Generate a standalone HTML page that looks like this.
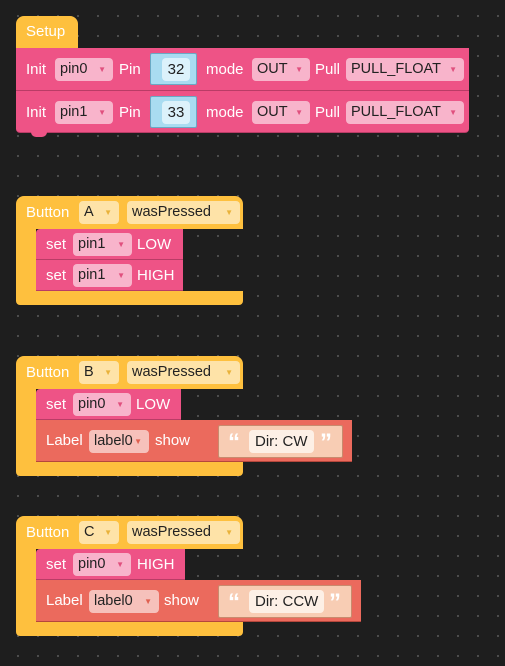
<!DOCTYPE html>
<html><head><meta charset="utf-8"><style>
*{margin:0;padding:0;box-sizing:border-box}
body{width:505px;height:666px;overflow:hidden;background-color:#1e1e1e;background-image:radial-gradient(circle,#555 0.8px,transparent 1.2px);background-size:20px 20px;background-position:8px 6px;font-family:"Liberation Sans",sans-serif;font-size:14.5px;position:relative}
.a{position:absolute}
.y{background:#fec03e}
.p{background:#ee5386;border-bottom:1px solid #b93c66}
.c{background:#eb6a5d;border-bottom:1px solid #b5473c}
.t{position:absolute;color:#fff;line-height:22px;font-size:15px}
.f{position:absolute;height:23px;border-radius:4px;line-height:23px;padding-left:5px;color:#222}
.fp{background:#f8b4cb}
.fy{background:#fee3a8}
.fc{background:#f6c1bb}
.f i{position:absolute;right:7px;top:0;font-style:normal;font-size:8px;color:#e0507e}
.fy i{color:#e9b23a}
.fc i{color:#e06050}
.in{position:absolute;background:#a9dcf1;border:1px solid #6aa9c4;border-radius:2px}
.in b{position:absolute;font-weight:normal;background:#dcf2fb;border-radius:4px;height:23px;line-height:23px;text-align:center;color:#222;font-size:15px}
.s{position:absolute;background:#f8cdb4;border:1px solid #c88b6e;border-radius:2px}
.s b{position:absolute;font-weight:normal;background:#fdf0e6;border-radius:4px;height:23px;line-height:23px;padding:0 6px;color:#222;font-size:15px}
.s u{position:absolute;text-decoration:none;color:#fff;font-size:24px;font-weight:bold;line-height:22px}
</style></head><body>

<div class="a y" style="left:16px;top:16px;width:62px;height:32px;border-radius:8px 8px 0 0"></div>
<div class="t" style="left:26px;top:21px">Setup</div>
<div class="a p" style="left:16px;top:48px;width:453px;height:43px"></div>
<div class="a p" style="left:16px;top:91px;width:453px;height:42px;border-radius:0 0 4px 4px"></div>
<div class="a" style="left:31px;top:132px;width:16px;height:5px;background:#ee5386;border-radius:0 0 6px 6px"></div>

<div class="t" style="left:26px;top:59px">Init</div>
<div class="f fp" style="left:55px;top:58px;width:58px">pin0<i>▼</i></div>
<div class="t" style="left:119px;top:59px">Pin</div>
<div class="in" style="left:150px;top:53px;width:47px;height:32px"><b style="left:11px;top:4px;width:28px">32</b></div>
<div class="t" style="left:206px;top:59px">mode</div>
<div class="f fp" style="left:252px;top:58px;width:58px">OUT<i>▼</i></div>
<div class="t" style="left:315px;top:59px">Pull</div>
<div class="f fp" style="left:346px;top:58px;width:118px">PULL_FLOAT<i>▼</i></div>

<div class="t" style="left:26px;top:102px">Init</div>
<div class="f fp" style="left:55px;top:101px;width:58px">pin1<i>▼</i></div>
<div class="t" style="left:119px;top:102px">Pin</div>
<div class="in" style="left:150px;top:96px;width:47px;height:32px"><b style="left:11px;top:4px;width:28px">33</b></div>
<div class="t" style="left:206px;top:102px">mode</div>
<div class="f fp" style="left:252px;top:101px;width:58px">OUT<i>▼</i></div>
<div class="t" style="left:315px;top:102px">Pull</div>
<div class="f fp" style="left:346px;top:101px;width:118px">PULL_FLOAT<i>▼</i></div>

<div class="a y" style="left:16px;top:196px;width:227px;height:33px;border-radius:8px 8px 0 0"></div>
<div class="a y" style="left:16px;top:228px;width:20px;height:65px"></div>
<div class="a y" style="left:16px;top:291px;width:227px;height:14px;border-radius:0 0 4px 4px"></div>
<div class="t" style="left:26px;top:202px">Button</div>
<div class="f fy" style="left:79px;top:201px;width:40px">A<i>▼</i></div>
<div class="f fy" style="left:127px;top:201px;width:113px">wasPressed<i>▼</i></div>
<div class="a p" style="left:36px;top:229px;width:147px;height:31px;border-radius:4px 0 0 0"></div>
<div class="a p" style="left:36px;top:260px;width:147px;height:31px"></div>
<div class="t" style="left:46px;top:234px">set</div>
<div class="f fp" style="left:73px;top:233px;width:59px">pin1<i>▼</i></div>
<div class="t" style="left:137px;top:234px">LOW</div>
<div class="t" style="left:46px;top:265px">set</div>
<div class="f fp" style="left:73px;top:264px;width:59px">pin1<i>▼</i></div>
<div class="t" style="left:137px;top:265px">HIGH</div>

<div class="a y" style="left:16px;top:356px;width:227px;height:33px;border-radius:8px 8px 0 0"></div>
<div class="a y" style="left:16px;top:388px;width:20px;height:76px"></div>
<div class="a y" style="left:16px;top:462px;width:227px;height:14px;border-radius:0 0 4px 4px"></div>
<div class="t" style="left:26px;top:362px">Button</div>
<div class="f fy" style="left:79px;top:361px;width:40px">B<i>▼</i></div>
<div class="f fy" style="left:127px;top:361px;width:113px">wasPressed<i>▼</i></div>
<div class="a p" style="left:36px;top:389px;width:145px;height:31px;border-radius:4px 0 0 0"></div>
<div class="t" style="left:46px;top:394px">set</div>
<div class="f fp" style="left:73px;top:393px;width:58px">pin0<i>▼</i></div>
<div class="t" style="left:136px;top:394px">LOW</div>
<div class="a c" style="left:36px;top:420px;width:316px;height:42px"></div>
<div class="t" style="left:46px;top:430px">Label</div>
<div class="f fc" style="left:89px;top:430px;width:60px">label0<i>▼</i></div>
<div class="t" style="left:155px;top:430px">show</div>
<div class="s" style="left:218px;top:425px;width:125px;height:33px"><u style="left:9px;top:6px">“</u><b style="left:30px;top:4px">Dir: CW</b><u style="left:101px;top:6px">”</u></div>

<div class="a y" style="left:16px;top:516px;width:227px;height:33px;border-radius:8px 8px 0 0"></div>
<div class="a y" style="left:16px;top:548px;width:20px;height:76px"></div>
<div class="a y" style="left:16px;top:622px;width:227px;height:14px;border-radius:0 0 4px 4px"></div>
<div class="t" style="left:26px;top:522px">Button</div>
<div class="f fy" style="left:79px;top:521px;width:40px">C<i>▼</i></div>
<div class="f fy" style="left:127px;top:521px;width:113px">wasPressed<i>▼</i></div>
<div class="a p" style="left:36px;top:549px;width:149px;height:31px;border-radius:4px 0 0 0"></div>
<div class="t" style="left:46px;top:554px">set</div>
<div class="f fp" style="left:73px;top:553px;width:58px">pin0<i>▼</i></div>
<div class="t" style="left:137px;top:554px">HIGH</div>
<div class="a c" style="left:36px;top:580px;width:325px;height:42px"></div>
<div class="t" style="left:46px;top:590px">Label</div>
<div class="f fc" style="left:89px;top:590px;width:70px">label0<i>▼</i></div>
<div class="t" style="left:164px;top:590px">show</div>
<div class="s" style="left:218px;top:585px;width:134px;height:33px"><u style="left:9px;top:6px">“</u><b style="left:30px;top:4px">Dir: CCW</b><u style="left:110px;top:6px">”</u></div>

</body></html>
